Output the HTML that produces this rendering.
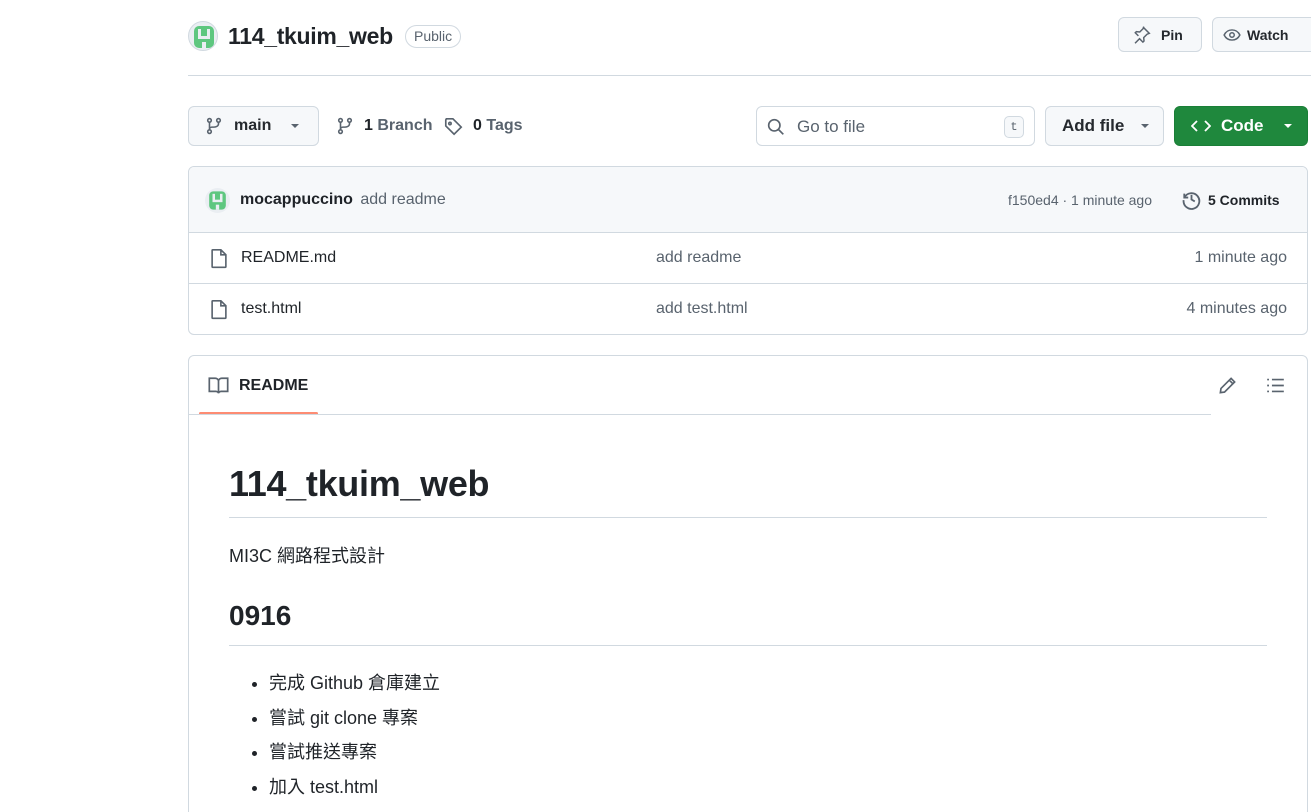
<!DOCTYPE html>
<html style="height:812px;overflow:hidden"><head><meta charset="utf-8"><style>
*{box-sizing:border-box;margin:0;padding:0}
body{width:1311px;height:812px;overflow:hidden;background:#fff;font-family:"Liberation Sans","Noto Sans CJK TC",sans-serif;color:#1f2328;position:relative}
.a{position:absolute}
.btn{position:absolute;border:1px solid #d1d9e0;border-radius:6px;background:#f6f8fa;display:flex;align-items:center;font-size:14px;font-weight:bold;color:#25292e}
svg{display:block}
.muted{color:#59636e}
.caret{width:0;height:0;border-left:4px solid transparent;border-right:4px solid transparent;border-top:4px solid #59636e}
</style></head><body>
<div class="a" style="left:188px;top:21px;width:30px;height:30px;border-radius:50%;background:#eaeef2;border:1px solid #d1d9e0;overflow:hidden">
<svg width="30" height="30" viewBox="0 0 30 30"><rect x="5" y="4" width="20" height="22" rx="5" fill="#5ec77f"/><rect x="9" y="7" width="3" height="10" fill="#eaeef2"/><rect x="18" y="7" width="3" height="10" fill="#eaeef2"/><rect x="12" y="14" width="6" height="3" fill="#eaeef2"/><rect x="13" y="20" width="4" height="6" fill="#eaeef2"/></svg></div>
<div class="a" style="left:228px;top:23px;font-size:23px;font-weight:600;color:#1f2328;letter-spacing:-0.3px">114_tkuim_web</div>
<div class="a" style="left:405px;top:25px;height:23px;padding:0 8px;border:1px solid #d1d9e0;border-radius:12px;font-size:14px;line-height:21px;color:#59636e">Public</div>
<div class="btn" style="left:1118px;top:17px;width:84px;height:35px;padding-left:14px;gap:10px;font-weight:600">
<svg width="18" height="18" viewBox="0 0 16 16" fill="none" stroke="#59636e" stroke-width="1.3"><path d="M9.5 1.5l5 5-2 .8-3 3 .3 3-1 1-3-3-4 4M4.8 8.8L2 6l1-1 3 .3 3-3 .5-1.8"/></svg>Pin</div>
<div class="btn" style="left:1212px;top:17px;width:110px;height:35px;padding-left:10px;gap:6px;font-weight:600">
<svg width="18" height="18" viewBox="0 0 16 16" fill="none" stroke="#59636e" stroke-width="1.3"><path d="M1 8c1.5-3 4-4.5 7-4.5S13.5 5 15 8c-1.5 3-4 4.5-7 4.5S2.5 11 1 8z"/><circle cx="8" cy="8" r="2"/></svg>Watch</div>
<div class="a" style="left:188px;top:75px;width:1123px;height:1px;background:#d1d9e0"></div>

<div class="btn" style="left:188px;top:106px;width:131px;height:40px;padding-left:16px;font-size:16px;font-weight:600">
<svg width="18" height="18" viewBox="0 0 16 16" fill="none" stroke="#59636e" stroke-width="1.4"><circle cx="4" cy="3" r="1.6"/><circle cx="4" cy="13" r="1.6"/><circle cx="12" cy="3" r="1.6"/><path d="M4 4.6v6.8M12 4.6v1.4c0 2-2 3-4 3H6c-1 0-2 .8-2 2"/></svg>
<span style="margin-left:11px">main</span><span class="caret" style="margin-left:20px"></span></div>
<svg class="a" style="left:336px;top:117px" width="18" height="18" viewBox="0 0 16 16" fill="none" stroke="#59636e" stroke-width="1.4"><circle cx="4" cy="3" r="1.6"/><circle cx="4" cy="13" r="1.6"/><circle cx="12" cy="3" r="1.6"/><path d="M4 4.6v6.8M12 4.6v1.4c0 2-2 3-4 3H6c-1 0-2 .8-2 2"/></svg>
<div class="a" style="left:364px;top:117px;font-size:16px;font-weight:600"><span>1</span> <span class="muted">Branch</span></div>
<svg class="a" style="left:444px;top:117px" width="19" height="19" viewBox="0 0 16 16" fill="none" stroke="#59636e" stroke-width="1.4"><path d="M1.5 2.5v5l7 7 6-6-7-7h-5.5z"/><circle cx="5" cy="5.5" r="1"/></svg>
<div class="a" style="left:473px;top:117px;font-size:16px;font-weight:600"><span>0</span> <span class="muted">Tags</span></div>

<div class="a" style="left:756px;top:106px;width:279px;height:40px;border:1px solid #d1d9e0;border-radius:6px;background:#fff">
<svg class="a" style="left:10px;top:11px" width="18" height="18" viewBox="0 0 16 16" fill="none" stroke="#59636e" stroke-width="1.5"><circle cx="6.5" cy="6.5" r="5"/><path d="M10.2 10.2l4.3 4.3"/></svg>
<div class="a muted" style="left:40px;top:10px;font-size:17px">Go to file</div>
<div class="a" style="right:10px;top:9px;width:20px;height:22px;border:1px solid #d1d9e0;border-radius:5px;background:#f6f8fa;font-family:'Liberation Mono',monospace;font-size:12px;text-align:center;line-height:20px;color:#59636e">t</div></div>
<div class="btn" style="left:1045px;top:106px;width:119px;height:40px;padding-left:16px;font-size:17px;font-weight:600">Add file<span class="caret" style="margin-left:17px"></span></div>
<div class="btn" style="left:1174px;top:106px;width:134px;height:40px;padding-left:16px;font-size:17px;background:#1f883d;border-color:#1a7f37;color:#fff;font-weight:600">
<svg width="20" height="14" viewBox="0 0 20 14" fill="none" stroke="#fff" stroke-width="1.8"><path d="M6 2L1 7l5 5M14 2l5 5-5 5"/></svg><span style="margin-left:10px">Code</span><span class="caret" style="margin-left:20px;border-top-color:#fff"></span></div>

<div class="a" style="left:188px;top:166px;width:1120px;height:169px;border:1px solid #d1d9e0;border-radius:6px;overflow:hidden">
<div style="height:66px;background:#f6f8fa;border-bottom:1px solid #d1d9e0;position:relative">
<div class="a" style="left:16px;top:21px;width:25px;height:25px;border-radius:50%;background:#eaeef2;overflow:hidden"><svg width="25" height="25" viewBox="0 0 30 30"><rect x="5" y="4" width="20" height="22" rx="5" fill="#5ec77f"/><rect x="9" y="7" width="3" height="10" fill="#eaeef2"/><rect x="18" y="7" width="3" height="10" fill="#eaeef2"/><rect x="12" y="14" width="6" height="3" fill="#eaeef2"/><rect x="13" y="20" width="4" height="6" fill="#eaeef2"/></svg></div>
<div class="a" style="left:51px;top:24px;font-size:16px;font-weight:bold">mocappuccino <span class="muted" style="font-weight:normal;margin-left:3px">add readme</span></div>
<div class="a muted" style="left:819px;top:25px;font-size:14px">f150ed4 · 1 minute ago</div>
<svg class="a" style="left:992px;top:22px" width="21" height="21" viewBox="0 0 16 16" fill="none" stroke="#59636e" stroke-width="1.4"><path d="M2.5 3.5v3h3"/><path d="M2.6 6.5A6 6 0 1 1 2 8.5"/><path d="M8 4.5V8l2.5 1.5"/></svg>
<div class="a" style="left:1019px;top:25px;font-size:14px;font-weight:bold">5 Commits</div></div>
<div style="height:51px;border-bottom:1px solid #d1d9e0;position:relative;font-size:16px">
<svg class="a" style="left:20px;top:15px" width="20" height="21" viewBox="0 0 16 16" fill="none" stroke="#59636e" stroke-width="1.3"><path d="M3 1h6.5L13.5 5v9.5a.5.5 0 0 1-.5.5H3a.5.5 0 0 1-.5-.5v-13A.5.5 0 0 1 3 1zM9.5 1v4h4"/></svg>
<div class="a" style="left:52px;top:16px">README.md</div><div class="a muted" style="left:467px;top:16px">add readme</div><div class="a muted" style="right:20px;top:16px">1 minute ago</div></div>
<div style="height:50px;position:relative;font-size:16px">
<svg class="a" style="left:20px;top:15px" width="20" height="21" viewBox="0 0 16 16" fill="none" stroke="#59636e" stroke-width="1.3"><path d="M3 1h6.5L13.5 5v9.5a.5.5 0 0 1-.5.5H3a.5.5 0 0 1-.5-.5v-13A.5.5 0 0 1 3 1zM9.5 1v4h4"/></svg>
<div class="a" style="left:52px;top:16px">test.html</div><div class="a muted" style="left:467px;top:16px">add test.html</div><div class="a muted" style="right:20px;top:16px">4 minutes ago</div></div>
</div>

<div class="a" style="left:188px;top:355px;width:1120px;height:500px;border:1px solid #d1d9e0;border-radius:6px">
<svg class="a" style="left:19px;top:20px" width="21" height="19" viewBox="0 0 16 14" fill="none" stroke="#59636e" stroke-width="1.3"><path d="M1 1.5h4.5c1.2 0 2.5.8 2.5 2V13c0-.8-1-1.5-2-1.5H1zM15 1.5h-4.5C9.3 1.5 8 2.3 8 3.5V13c0-.8 1-1.5 2-1.5H15z"/></svg>
<div class="a" style="left:50px;top:21px;font-size:16px;font-weight:bold">README</div>
<div class="a" style="left:10px;top:56px;width:119px;height:3px;background:#fd8c73;border-radius:2px"></div>
<div class="a" style="left:0;top:58px;width:1022px;height:1px;background:#d1d9e0"></div>
<svg class="a" style="left:1029px;top:20px" width="19" height="19" viewBox="0 0 16 16" fill="none" stroke="#59636e" stroke-width="1.4"><path d="M11 2l3 3-8.5 8.5L2 14l.5-3.5zM9.5 3.5l3 3"/></svg>
<svg class="a" style="left:1077px;top:20px" width="19" height="19" viewBox="0 0 16 16" fill="none" stroke="#59636e" stroke-width="1.4"><path d="M5 3h10M5 8h10M5 13h10M1 3h1.5M1 8h1.5M1 13h1.5"/></svg>
<div class="a" style="left:40px;top:104px;font-size:36px;font-weight:600;line-height:48px;letter-spacing:-0.3px">114_tkuim_web</div>
<div class="a" style="left:40px;top:161px;width:1038px;height:1px;background:#d1d9e0"></div>
<div class="a" style="left:40px;top:186px;font-size:18px">MI3C 網路程式設計</div>
<div class="a" style="left:40px;top:244px;font-size:28px;font-weight:600">0916</div>
<div class="a" style="left:40px;top:289px;width:1038px;height:1px;background:#d1d9e0"></div>
<ul class="a" style="left:80px;top:310px;font-size:18px;line-height:34.5px">
<li>完成 Github 倉庫建立</li><li>嘗試 git clone 專案</li><li>嘗試推送專案</li><li>加入 test.html</li></ul>
</div>
</body></html>
